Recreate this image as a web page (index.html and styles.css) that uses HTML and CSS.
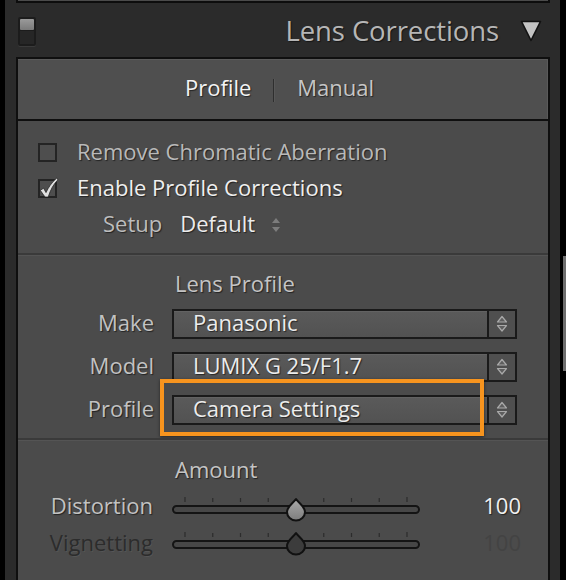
FILE: index.html
```html
<!DOCTYPE html>
<html>
<head>
<meta charset="utf-8">
<link rel="stylesheet" href="styles.css">
</head>
<body>
<div class="app">
  <div class="prev"></div>
  <div class="header">
    <div class="toggle"><span class="knob"></span><span class="slot"></span></div>
    <div class="title">Lens Corrections</div>
    <svg class="disclosure" width="22" height="22" viewBox="0 0 22 22"><path d="M1.5 1.5 L20.5 1.5 L11 20.5 Z" fill="#c3c3c3" stroke="#111" stroke-width="1.6" stroke-linejoin="round"/></svg>
  </div>
  <div class="panel">
    <div class="tabs">
      <span class="tab active">Profile</span>
      <span class="tab-sep"></span>
      <span class="tab">Manual</span>
    </div>
    <div class="section checks">
      <div class="check"><span class="box"></span><span class="ctext dim">Remove Chromatic Aberration</span></div>
      <div class="check"><span class="box">
        <svg class="tick" width="22" height="24" viewBox="0 0 22 24"><path d="M2.3 14.3 L5.6 12.2 L8 16.6 C10.5 11.2 13.5 6.8 18.5 2.3 L20 3.7 C15.5 8.2 12.5 13.6 10.2 21 L7 21 Z" fill="#e0e0e0" stroke="#1a1a1a" stroke-width="0.7" stroke-linejoin="round"/></svg>
      </span><span class="ctext bright">Enable Profile Corrections</span></div>
      <div class="setup">
        <span class="slabel">Setup</span>
        <span class="sval">Default</span>
        <svg class="updown" width="10" height="16" viewBox="0 0 10 16"><path d="M5 1 L9 6 L1 6 Z M1 10 L9 10 L5 15 Z" fill="#7d7d7d"/></svg>
      </div>
    </div>
    <div class="section lens">
      <div class="sub">Lens Profile</div>
      <div class="grid">
        <span class="rlabel">Make</span>
        <div class="select"><span class="field">Panasonic</span><span class="stepper"><svg width="12" height="18" viewBox="0 0 12 18"><path d="M6 1.5 L10.5 7 L1.5 7 Z M1.5 10.5 L10.5 10.5 L6 16 Z" fill="#5e5e5e" stroke="#a9a9a9" stroke-width="1.2" stroke-linejoin="round"/></svg></span></div>
        <span class="rlabel">Model</span>
        <div class="select"><span class="field">LUMIX G 25/F1.7</span><span class="stepper"><svg width="12" height="18" viewBox="0 0 12 18"><path d="M6 1.5 L10.5 7 L1.5 7 Z M1.5 10.5 L10.5 10.5 L6 16 Z" fill="#5e5e5e" stroke="#a9a9a9" stroke-width="1.2" stroke-linejoin="round"/></svg></span></div>
        <span class="rlabel">Profile</span>
        <div class="select"><span class="field">Camera Settings</span><span class="stepper"><svg width="12" height="18" viewBox="0 0 12 18"><path d="M6 1.5 L10.5 7 L1.5 7 Z M1.5 10.5 L10.5 10.5 L6 16 Z" fill="#5e5e5e" stroke="#a9a9a9" stroke-width="1.2" stroke-linejoin="round"/></svg></span></div>
      </div>
      <div class="highlight"></div>
    </div>
    <div class="section amount">
      <div class="sub">Amount</div>
      <div class="sgrid">
        <span class="rlabel">Distortion</span>
        <svg class="slider" width="248" height="37" viewBox="0 0 248 37">
          <g stroke="#2c2c2c" stroke-width="1.2">
            <path d="M13 8 V13 M40.75 9 V13 M68.5 9 V13 M96.25 9 V13 M151.75 9 V13 M179.5 9 V13 M207.25 9 V13 M235 8 V13"/>
          </g>
          <rect x="1" y="17" width="246" height="7" rx="3.5" fill="#474747" stroke="#141414" stroke-width="2"/>
          <defs><linearGradient id="g1" x1="0" y1="0" x2="0" y2="1"><stop offset="0" stop-color="#a9a9a9"/><stop offset="1" stop-color="#7d7d7d"/></linearGradient></defs>
          <path d="M124 10 C121.5 14 115 17.5 115 23 A9 8.5 0 0 0 133 23 C133 17.5 126.5 14 124 10 Z" fill="url(#g1)" stroke="#111" stroke-width="2" stroke-linejoin="round"/>
        </svg>
        <span class="sval-num">100</span>
        <span class="rlabel off">Vignetting</span>
        <svg class="slider" width="248" height="37" viewBox="0 0 248 37">
          <g stroke="#2c2c2c" stroke-width="1.2">
            <path d="M13 6 V11 M40.75 7 V11 M68.5 7 V11 M96.25 7 V11 M151.75 7 V11 M179.5 7 V11 M207.25 7 V11 M235 6 V11"/>
          </g>
          <rect x="1" y="15" width="246" height="7" rx="3.5" fill="#474747" stroke="#141414" stroke-width="2"/>
          <path d="M124 7 C121.5 11 115 14.5 115 20 A9 8.5 0 0 0 133 20 C133 14.5 126.5 11 124 7 Z" fill="#3c3c3c" stroke="#111" stroke-width="2" stroke-linejoin="round"/>
        </svg>
        <span class="sval-num off">100</span>
      </div>
    </div>
  </div>
</div>
<div class="track"><div class="thumb"></div></div>
</body>
</html>
```

FILE: styles.css
```css
* { box-sizing: border-box; }
html, body { margin: 0; padding: 0; }
body {
  width: 566px;
  height: 580px;
  overflow: hidden;
  background: #000;
  display: flex;
  font-family: "Open Sans", "Lato", sans-serif;
}
.app {
  margin-left: 5px;
  width: 555px;
  height: 580px;
  background: #2b2b2b;
  padding: 0 10px 0 11px;
  display: flex;
  flex-direction: column;
}
.track {
  width: 6px;
  padding-left: 3px;
}
.thumb {
  width: 3px;
  height: 115px;
  margin-top: 256px;
  background: #6e6e6e;
}
.prev {
  height: 3px;
  background: #4b4b4b;
  border: 2px solid #0d0d0d;
  border-top: 0;
}
.header {
  height: 54px;
  display: flex;
  align-items: center;
  padding-left: 2px;
}
.toggle {
  width: 18px;
  height: 29px;
  background: #1c1c1c;
  border-radius: 2px;
  padding: 2px;
  display: flex;
  flex-direction: column;
  gap: 1px;
  box-shadow: 0 1px 0 #3a3a3a;
  margin-top: 2px;
}
.knob {
  height: 11px;
  background: linear-gradient(#9a9a9a, #7a7a7a);
  border-radius: 1px;
}
.slot {
  flex: 1;
  background: #262626;
}
.title {
  margin-left: auto;
  margin-right: 21px;
  font-size: 27.5px;
  color: #b6b6b6;
  letter-spacing: -0.1px;
  text-shadow: 1px 1px 1px rgba(0,0,0,0.5);
}
.disclosure {
  margin-right: 8px;
  margin-top: 1px;
}
.panel {
  flex: 1;
  border: 2px solid #0f0f0f;
  border-bottom: 0;
  background: #4b4b4b;
  display: flex;
  flex-direction: column;
}
.tabs {
  height: 62px;
  background: #4f4f4f;
  border-bottom: 2px solid #0f0f0f;
  box-shadow: inset -1px 1px 0 #5a5a5a;
  display: flex;
  align-items: center;
  padding-left: 167px;
  padding-bottom: 4px;
}
.tab {
  font-size: 22px;
  color: #c6c6c6;
  text-shadow: 1px 1px 1px rgba(0,0,0,0.55);
}
.tab.active { color: #f4f4f4; }
.tab-sep {
  width: 1px;
  height: 23px;
  background: #2e2e2e;
  margin: 6px 23px 0 22px;
  box-shadow: 1px 0 0 #585858;
}
.section { position: relative; }
.checks {
  padding: 14px 0 10px 20px;
}
.check {
  height: 35.5px;
  display: flex;
  align-items: center;
}
.check + .check { height: 36px; }
.box {
  position: relative;
  width: 19px;
  height: 19px;
  border: 2px solid #242424;
  background: #4e4e4e;
  margin-right: 20px;
  flex: none;
}
.tick {
  position: absolute;
  left: -2px;
  top: -5px;
}
.ctext {
  font-size: 22px;
  line-height: 28px;
  padding-bottom: 4px;
  text-shadow: 1px 1px 1px rgba(0,0,0,0.55);
}
.ctext.dim { color: #b9b9b9; }
.ctext.bright { color: #efefef; }
.setup {
  height: 36px;
  display: flex;
  align-items: center;
  padding-left: 65px;
}
.slabel {
  font-size: 22px;
  line-height: 28px;
  padding-bottom: 4px;
  color: #bdbdbd;
  text-shadow: 1px 1px 1px rgba(0,0,0,0.55);
  margin-right: 18px;
}
.sval {
  font-size: 22px;
  line-height: 28px;
  padding-bottom: 4px;
  color: #ececec;
  text-shadow: 1px 1px 1px rgba(0,0,0,0.55);
  margin-right: 16px;
}
.lens, .amount {
  border-top: 2px solid #3a3a3a;
  box-shadow: inset 0 1px 0 #545454;
}
.lens {
  padding: 14px 0 13px 0;
}
.sub {
  height: 32px;
  display: flex;
  align-items: center;
  padding-left: 157px;
  padding-bottom: 4px;
  font-size: 22px;
  line-height: 28px;
  color: #c4c4c4;
  text-shadow: 1px 1px 1px rgba(0,0,0,0.55);
}
.grid {
  margin-top: 8px;
  display: grid;
  grid-template-columns: 136px 345px;
  grid-auto-rows: 30px;
  column-gap: 18px;
  row-gap: 13px;
  align-items: center;
}
.rlabel {
  text-align: right;
  font-size: 22px;
  line-height: 26px;
  padding-bottom: 4px;
  color: #c2c2c2;
  text-shadow: 1px 1px 1px rgba(0,0,0,0.55);
}
.rlabel.off {
  color: #2c2c2c;
  text-shadow: 1px 1px 0 rgba(255,255,255,0.06);
}
.select {
  height: 30px;
  border: 2px solid #1a1a1a;
  display: flex;
}
.field {
  flex: 1;
  background: linear-gradient(#5a5a5a, #525252);
  box-shadow: inset 0 1px 0 #626262;
  padding-left: 19px;
  font-size: 22px;
  line-height: 22px;
  color: #ececec;
  text-shadow: 1px 1px 1px rgba(0,0,0,0.55);
  white-space: nowrap;
}
.stepper {
  width: 28px;
  border-left: 2px solid #1a1a1a;
  background: #4f4f4f;
  display: flex;
  align-items: center;
  justify-content: center;
}
.highlight {
  position: absolute;
  left: 142px;
  top: 124px;
  width: 324px;
  height: 57px;
  border: 4px solid #f7941e;
  box-shadow: 0 1px 3px rgba(0,0,0,0.5);
}
.amount {
  padding-top: 16px;
}
.amount .sub { height: 30px; }
.sgrid {
  margin-top: 3px;
  display: grid;
  grid-template-columns: 135px 248px 82px;
  column-gap: 19px;
  grid-auto-rows: 37px;
  align-items: center;
}
.sval-num {
  text-align: right;
  font-size: 22px;
  line-height: 26px;
  padding-bottom: 4px;
  color: #f0f0f0;
  text-shadow: 1px 1px 1px rgba(0,0,0,0.55);
}
.sval-num.off {
  color: #434343;
  text-shadow: none;
}
.slider { display: block; }
```
